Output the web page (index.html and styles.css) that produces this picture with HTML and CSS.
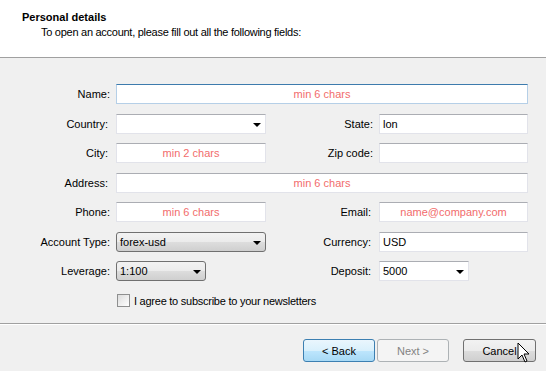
FILE: index.html
```html
<!DOCTYPE html>
<html>
<head>
	<meta charset="utf-8">
	<title>Personal details</title>
	<link rel="stylesheet" href="styles.css">
</head>
<body>
	<div class="head">
		<div class="title">Personal details</div>
		<div class="sub">To open an account, please fill out all the following fields:</div>
	</div>
	<div class="form">
		<div class="grid">
			<label class="lbl">Name:</label>
			<div class="box wide focus hint">min 6 chars</div>

			<label class="lbl">Country:</label>
			<div class="box combo"><span></span><i class="arrow"></i></div>
			<label class="lbl">State:</label>
			<div class="box">lon</div>

			<label class="lbl">City:</label>
			<div class="box hint">min 2 chars</div>
			<label class="lbl">Zip code:</label>
			<div class="box"></div>

			<label class="lbl">Address:</label>
			<div class="box wide hint">min 6 chars</div>

			<label class="lbl">Phone:</label>
			<div class="box hint">min 6 chars</div>
			<label class="lbl">Email:</label>
			<div class="box hint">name@company.com</div>

			<label class="lbl">Account Type:</label>
			<div class="drop"><span>forex-usd</span><i class="arrow"></i></div>
			<label class="lbl">Currency:</label>
			<div class="box">USD</div>

			<label class="lbl">Leverage:</label>
			<div class="drop short"><span>1:100</span><i class="arrow"></i></div>
			<label class="lbl">Deposit:</label>
			<div class="box combo short"><span>5000</span><i class="arrow"></i></div>

			<div class="check">
				<span class="tick"></span>
				<span>I agree to subscribe to your newsletters</span>
			</div>
		</div>
	</div>
	<div class="foot">
		<button class="btn active">&lt; Back</button>
		<button class="btn off">Next &gt;</button>
		<button class="btn cancel">Cancel</button>
		<svg class="cursor" width="14" height="22" viewBox="0 0 14 22">
			<path d="M1 1 L1 17 L5 13 L8 20 L10 19 L7 12 L12 12 Z" fill="#fff" stroke="#000" stroke-width="1"/>
		</svg>
	</div>
</body>
</html>
```

FILE: styles.css
```css
body {
	margin: 0;
	background: #f0f0f0;
	font-family: "Liberation Sans", Arial, sans-serif;
	font-size: 11px;
	color: #000;
}

.head {
	background: #fff;
	height: 58px;
	border-bottom: 1px solid #a0a0a0;
	padding-left: 22px;
	box-sizing: border-box;
}
.title {
	font-weight: bold;
	font-size: 11px;
	padding-top: 11px;
}
.sub {
	padding-left: 19px;
	padding-top: 3px;
	letter-spacing: -0.27px;
}

.form {
	height: 266px;
	border-bottom: 1px solid #a0a0a0;
	box-sizing: border-box;
	padding-top: 26px;
}
.grid {
	display: grid;
	grid-template-columns: 116px 150px 113px 149px;
	grid-auto-rows: 20px;
	row-gap: 9.5px;
}
.lbl {
	text-align: right;
	padding-right: 6px;
	line-height: 20px;
}
.lbl:nth-of-type(even) {
	padding-right: 8px;
}

.box {
	background: #fff;
	border: 1px solid #e2e3ea;
	border-top-color: #abadb3;
	padding: 0 3px;
	line-height: 18px;
	white-space: nowrap;
	position: relative;
}
.wide {
	grid-column: 2 / 5;
}
.focus {
	border-color: #b5cfe7;
	border-top-color: #3d7bad;
}
.hint {
	color: #f26c6c;
	text-align: center;
}
.short {
	width: 90px;
	box-sizing: border-box;
}
.combo span {
	display: block;
}

.arrow {
	position: absolute;
	right: 4px;
	top: 8px;
	width: 0;
	height: 0;
	border-left: 4px solid transparent;
	border-right: 4px solid transparent;
	border-top: 4px solid #000;
}

.drop {
	position: relative;
	border: 1px solid #707070;
	border-radius: 3px;
	background: linear-gradient(#f2f2f2 0%, #ebebeb 50%, #dddddd 51%, #cfcfcf 100%);
	line-height: 18px;
	padding: 0 3px;
}
.drop span {
	display: block;
	margin-right: 15px;
}
.drop.short {
	width: 90px;
	box-sizing: border-box;
}

.check {
	grid-column: 2 / 5;
	display: flex;
	align-items: center;
	gap: 4px;
	padding-left: 1px;
	letter-spacing: -0.25px;
}
.tick {
	width: 11px;
	height: 11px;
	border: 1px solid #8e8f8f;
	background: linear-gradient(135deg, #dcdcdc, #fff);
}

.foot {
	position: relative;
	height: 45px;
	border-top: 1px solid #fff;
	display: flex;
	align-items: flex-start;
	padding-top: 14px;
	padding-left: 303px;
}
.btn {
	width: 72px;
	height: 23px;
	font-family: inherit;
	font-size: 11px;
	border: 1px solid #707070;
	border-radius: 3px;
	background: linear-gradient(#f2f2f2 0%, #ebebeb 50%, #dddddd 51%, #cfcfcf 100%);
	padding: 0;
	margin-right: 2px;
}
.active {
	border-color: #3c7fb1;
	background: linear-gradient(#eaf6fd 0%, #d9f0fc 50%, #bee6fd 51%, #a7d9f5 100%);
}
.off {
	border-color: #adb2b5;
	background: #f4f4f4;
	color: #838383;
}
.cancel {
	margin-left: 12px;
	width: 73px;
}
.cursor {
	position: absolute;
	left: 517px;
	top: 17px;
}
```
